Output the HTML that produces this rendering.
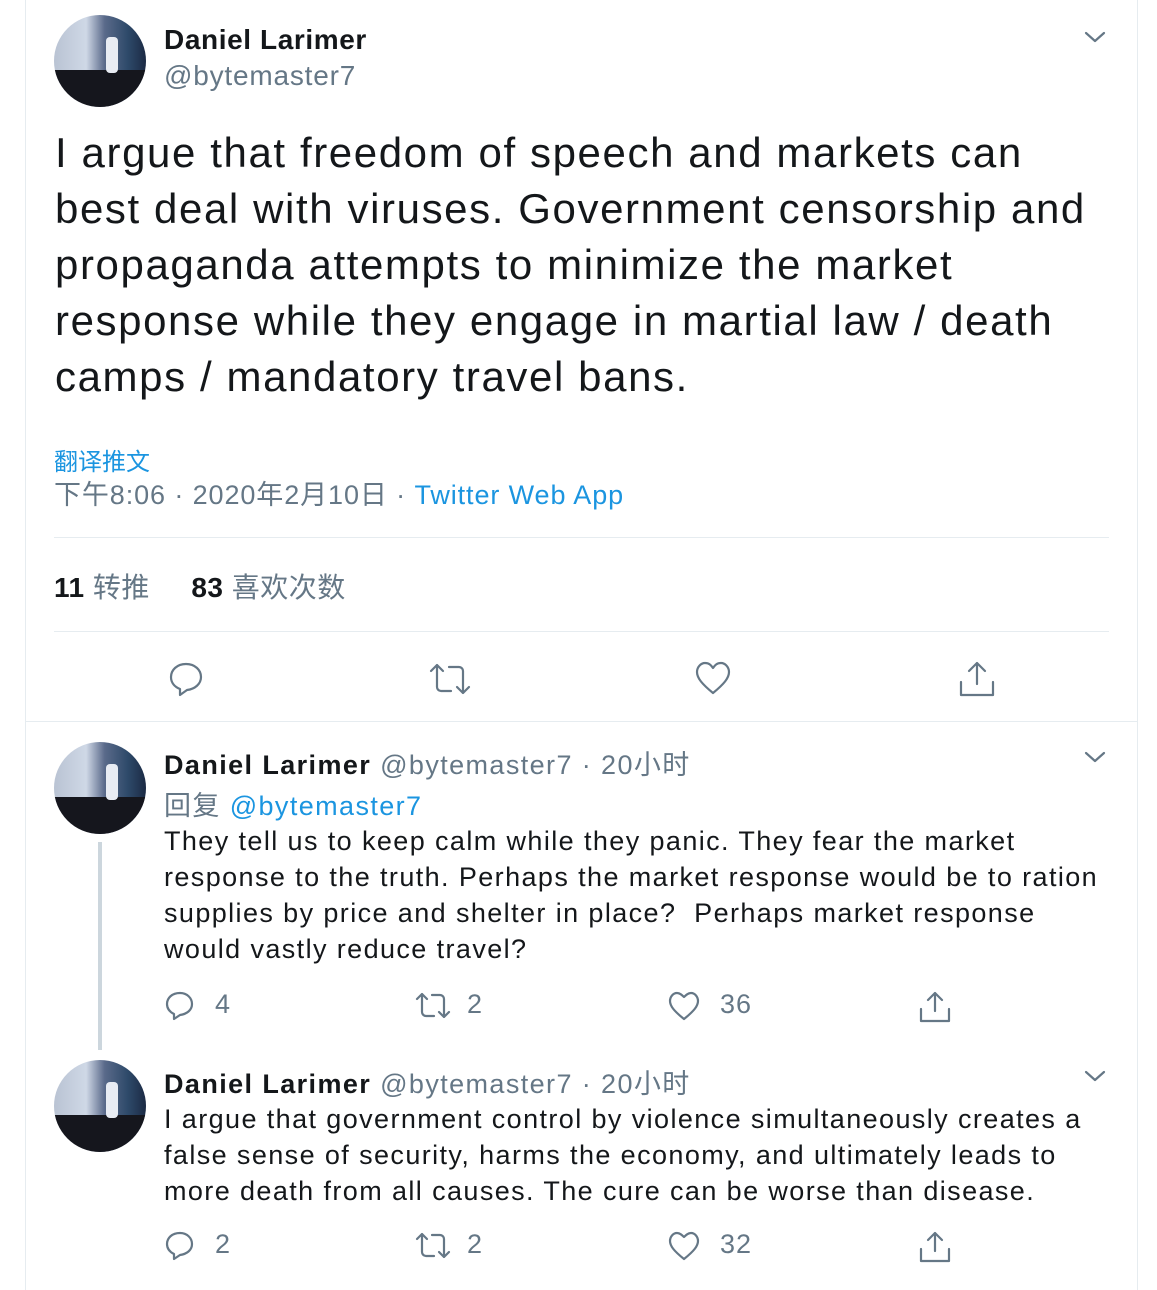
<!DOCTYPE html>
<html><head><meta charset="utf-8"><style>
body{margin:0;width:1157px;height:1280px;background:#fff;position:relative;overflow:hidden;font-family:"Liberation Sans","Noto Sans CJK SC",sans-serif;color:#14171a}
.abs{position:absolute;white-space:nowrap}
.card{position:absolute;left:25px;top:0;width:1111px;height:1290px;border-left:1px solid #e6ecf0;border-right:1px solid #e6ecf0}
.av{position:absolute;width:92px;height:92px;border-radius:50%;overflow:hidden;background:linear-gradient(90deg,#b9c3d3 0%,#cfd8e6 35%,#5a6a8a 55%,#2e4a6a 80%,#1b2a44 100%)}
.av:before{content:"";position:absolute;left:0;bottom:0;width:100%;height:40%;background:#15161d}
.av:after{content:"";position:absolute;left:52px;top:22px;width:12px;height:36px;background:#e8ecf3;border-radius:4px}
.grey{color:#657786}
.blue{color:#1b95e0}
.rt{font-size:27px;letter-spacing:1.4px}
svg{position:absolute;fill:none;stroke:#657786;stroke-width:2.2;stroke-linecap:round;stroke-linejoin:round}
</style></head><body>
<div class="card"></div>
<div class="av" style="left:54px;top:15px"></div>
<div class="abs" style="left:164px;top:24px;font-size:28px;font-weight:bold;letter-spacing:0.6px">Daniel Larimer</div>
<div class="abs grey" style="left:164px;top:60px;font-size:28px;letter-spacing:0.8px">@bytemaster7</div>
<svg style="left:1084px;top:30px" width="22" height="14" viewBox="0 0 22 14"><path d="M2 3l9 8 9-8"/></svg>
<div class="abs" style="left:55px;top:125px;font-size:42px;line-height:56px;letter-spacing:1.6px">I argue that freedom of speech and markets can<br>best deal with viruses. Government censorship and<br>propaganda attempts to minimize the market<br>response while they engage in martial law / death<br>camps / mandatory travel bans.</div>
<div class="abs blue" style="left:54px;top:442px;font-size:24px">翻译推文</div>
<div class="abs grey" style="left:54px;top:473px;font-size:27px;letter-spacing:0.9px">下午8:06 · 2020年2月10日 · <span class="blue">Twitter Web App</span></div>
<div class="abs" style="left:54px;top:537px;width:1055px;height:1px;background:#e6ecf0"></div>
<div class="abs" style="left:54px;top:566px;font-size:28px;letter-spacing:0.5px"><b>11</b> <span class="grey">转推</span>&nbsp;&nbsp;&nbsp;&nbsp;&nbsp;<b>83</b> <span class="grey">喜欢次数</span></div>
<div class="abs" style="left:54px;top:631px;width:1055px;height:1px;background:#e6ecf0"></div>
<svg style="left:167px;top:660px" width="38" height="38" viewBox="0 0 38 38"><path d="M19 4C10 4 4 10 4 17c0 6 4 10 9 12v6l7-5c8-1 14-6 14-13C34 10 28 4 19 4z"/></svg>
<svg style="left:428px;top:662px" width="44" height="34" viewBox="0 0 44 34"><path d="M3 9l6-6 6 6M9 3v22a4 4 0 0 0 4 4h10M41 25l-6 6-6-6M35 31V9a4 4 0 0 0-4-4H21"/></svg>
<svg style="left:694px;top:660px" width="38" height="36" viewBox="0 0 38 36"><path d="M19 33C8 24 3 18 3 12c0-5 4-9 8-9 4 0 6 2 8 5 2-3 4-5 8-5 4 0 8 4 8 9 0 6-5 12-16 21z"/></svg>
<svg style="left:958px;top:660px" width="38" height="38" viewBox="0 0 38 38"><path d="M19 24V3M11 11l8-8 8 8M3 22v13h32V22"/></svg>
<div class="abs" style="left:25px;top:721px;width:1112px;height:1px;background:#e6ecf0"></div>
<div class="av" style="left:54px;top:742px"></div>
<div class="abs" style="left:98px;top:842px;width:4px;height:208px;background:#ccd6dd"></div>
<div class="abs rt" style="left:164px;top:743px"><b>Daniel Larimer</b> <span class="grey">@bytemaster7 · 20小时</span></div>
<svg style="left:1084px;top:750px" width="22" height="14" viewBox="0 0 22 14"><path d="M2 3l9 8 9-8"/></svg>
<div class="abs grey rt" style="left:164px;top:784px">回复 <span class="blue">@bytemaster7</span></div>
<div class="abs rt" style="left:164px;top:823px;line-height:36px">They tell us to keep calm while they panic. They fear the market<br>response to the truth. Perhaps the market response would be to ration<br>supplies by price and shelter in place?&nbsp; Perhaps market response<br>would vastly reduce travel?</div>
<svg style="left:164px;top:990px" width="32" height="32" viewBox="0 0 32 32"><path d="M16 3C8 3 3 8 3 14c0 5 3 8 7 10v5l6-4c7-1 12-5 12-11C28 8 23 3 16 3z"/></svg>
<div class="abs grey" style="left:215px;top:989px;font-size:27px">4</div>
<svg style="left:414px;top:991px" width="38" height="30" viewBox="0 0 38 30"><path d="M3 8l5-5 5 5M8 3v18a4 4 0 0 0 4 4h8M35 21l-5 5-5-5M30 26V8a4 4 0 0 0-4-4h-8"/></svg>
<div class="abs grey" style="left:467px;top:989px;font-size:27px">2</div>
<svg style="left:667px;top:990px" width="34" height="32" viewBox="0 0 34 32"><path d="M17 29C7 21 3 16 3 11c0-4 3-8 7-8 3 0 5 2 7 4 2-2 4-4 7-4 4 0 7 4 7 8 0 5-4 10-14 18z"/></svg>
<div class="abs grey" style="left:720px;top:989px;font-size:27px;letter-spacing:1px">36</div>
<svg style="left:918px;top:990px" width="34" height="34" viewBox="0 0 34 34"><path d="M17 21V3M10 10l7-7 7 7M3 19v12h28V19"/></svg>
<div class="av" style="left:54px;top:1060px"></div>
<div class="abs rt" style="left:164px;top:1062px"><b>Daniel Larimer</b> <span class="grey">@bytemaster7 · 20小时</span></div>
<svg style="left:1084px;top:1069px" width="22" height="14" viewBox="0 0 22 14"><path d="M2 3l9 8 9-8"/></svg>
<div class="abs rt" style="left:164px;top:1101px;line-height:36px">I argue that government control by violence simultaneously creates a<br>false sense of security, harms the economy, and ultimately leads to<br>more death from all causes. The cure can be worse than disease.</div>
<svg style="left:164px;top:1230px" width="32" height="32" viewBox="0 0 32 32"><path d="M16 3C8 3 3 8 3 14c0 5 3 8 7 10v5l6-4c7-1 12-5 12-11C28 8 23 3 16 3z"/></svg>
<div class="abs grey" style="left:215px;top:1229px;font-size:27px">2</div>
<svg style="left:414px;top:1231px" width="38" height="30" viewBox="0 0 38 30"><path d="M3 8l5-5 5 5M8 3v18a4 4 0 0 0 4 4h8M35 21l-5 5-5-5M30 26V8a4 4 0 0 0-4-4h-8"/></svg>
<div class="abs grey" style="left:467px;top:1229px;font-size:27px">2</div>
<svg style="left:667px;top:1230px" width="34" height="32" viewBox="0 0 34 32"><path d="M17 29C7 21 3 16 3 11c0-4 3-8 7-8 3 0 5 2 7 4 2-2 4-4 7-4 4 0 7 4 7 8 0 5-4 10-14 18z"/></svg>
<div class="abs grey" style="left:720px;top:1229px;font-size:27px;letter-spacing:1px">32</div>
<svg style="left:918px;top:1230px" width="34" height="34" viewBox="0 0 34 34"><path d="M17 21V3M10 10l7-7 7 7M3 19v12h28V19"/></svg>
</body></html>
